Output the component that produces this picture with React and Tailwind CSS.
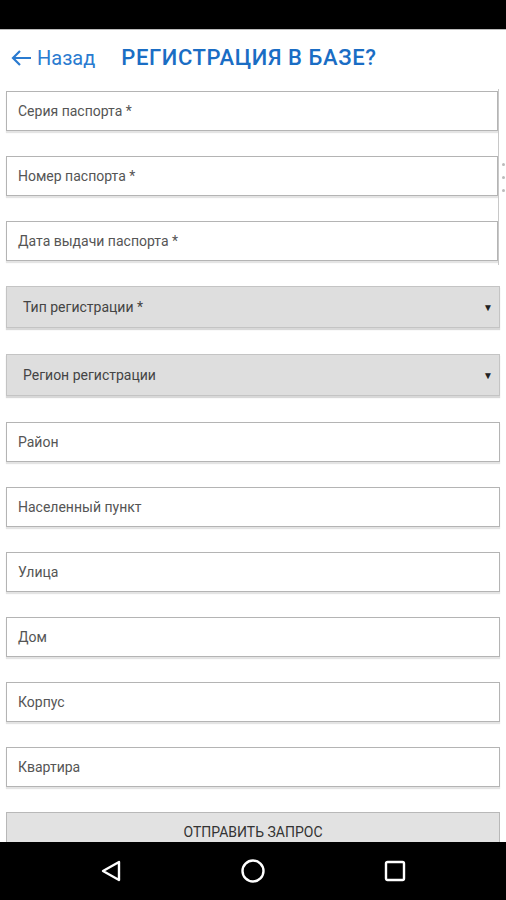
import { useState } from "react";

const topFields = ["Серия паспорта *", "Номер паспорта *", "Дата выдачи паспорта *"];
const addressFields = ["Район", "Населенный пункт", "Улица", "Дом", "Корпус", "Квартира"];

function Field({ label }) {
  return (
    <div className="flex h-[40px] items-center border border-[#b4b4b4] bg-white pl-[11px] text-[14px] text-[#555] shadow-[0_2px_1px_#e4e4e4]">
      {label}
    </div>
  );
}

function Select({ label }) {
  return (
    <div className="flex h-[42px] items-center justify-between border border-[#c4c4c4] bg-[#dedede] pl-[16px] pr-[6px] text-[14px] text-[#444] shadow-[0_2px_1px_#d8d8d8]">
      <span>{label}</span>
      <span className="text-[10px] text-[#222]">▼</span>
    </div>
  );
}

export default function App() {
  const [sent, setSent] = useState(false);

  return (
    <div className="flex h-[900px] w-[506px] flex-col overflow-hidden bg-white font-['Roboto',sans-serif]">
      <div className="h-[29px] bg-black" />
      <div className="h-[1px] bg-[#bbb]" />
      <header className="flex h-[55px] items-center pl-[10px]">
        <svg width="22" height="18" viewBox="0 0 22 18" className="text-[#2a7bd0]">
          <path d="M21 9H3M10 2L3 9l7 7" fill="none" stroke="currentColor" strokeWidth="2.2" />
        </svg>
        <span className="ml-[5px] text-[20px] text-[#2a7bd0]">Назад</span>
        <h1 className="ml-[26px] text-[22px] font-medium tracking-[0.6px] text-[#1a6dc4]">РЕГИСТРАЦИЯ В БАЗЕ?</h1>
      </header>

      <main className="relative flex flex-1 flex-col overflow-hidden px-[6px] pt-[6px]">
        <div className="flex flex-col gap-[25px] pr-[2px]">
          {topFields.map((f) => (
            <Field key={f} label={f} />
          ))}
        </div>
        <div className="absolute right-[3px] top-[4px] flex h-[176px] w-[5px] flex-col items-center justify-center border-l border-[#c8c8c8]">
          <div className="ml-[4px] flex flex-col gap-[10px]">
            <span className="h-[3px] w-[3px] rounded-full bg-[#bbb]" />
            <span className="h-[3px] w-[3px] rounded-full bg-[#bbb]" />
            <span className="h-[3px] w-[3px] rounded-full bg-[#bbb]" />
          </div>
        </div>

        <div className="mt-[25px] flex flex-col gap-[26px]">
          <Select label="Тип регистрации *" />
          <Select label="Регион регистрации" />
        </div>

        <div className="mt-[26px] flex flex-col gap-[25px]">
          {addressFields.map((f) => (
            <Field key={f} label={f} />
          ))}
        </div>

        <button
          type="button"
          onClick={() => setSent(true)}
          className="mt-[25px] h-[40px] shrink-0 border border-[#b8b8b8] bg-[#e2e2e2] text-[14px] text-[#333]"
        >
          {sent ? "ОТПРАВКА..." : "ОТПРАВИТЬ ЗАПРОС"}
        </button>
      </main>

      <nav className="flex h-[58px] shrink-0 items-center justify-center gap-[118px] bg-black">
        <svg width="22" height="24" viewBox="0 0 22 24">
          <path d="M19 3L3 12l16 9z" fill="none" stroke="white" strokeWidth="2.4" strokeLinejoin="round" />
        </svg>
        <svg width="26" height="26" viewBox="0 0 26 26">
          <circle cx="13" cy="13" r="10.5" fill="none" stroke="white" strokeWidth="2.4" />
        </svg>
        <svg width="22" height="22" viewBox="0 0 22 22">
          <rect x="2" y="2" width="18" height="18" rx="1.5" fill="none" stroke="white" strokeWidth="2.4" />
        </svg>
      </nav>
    </div>
  );
}
